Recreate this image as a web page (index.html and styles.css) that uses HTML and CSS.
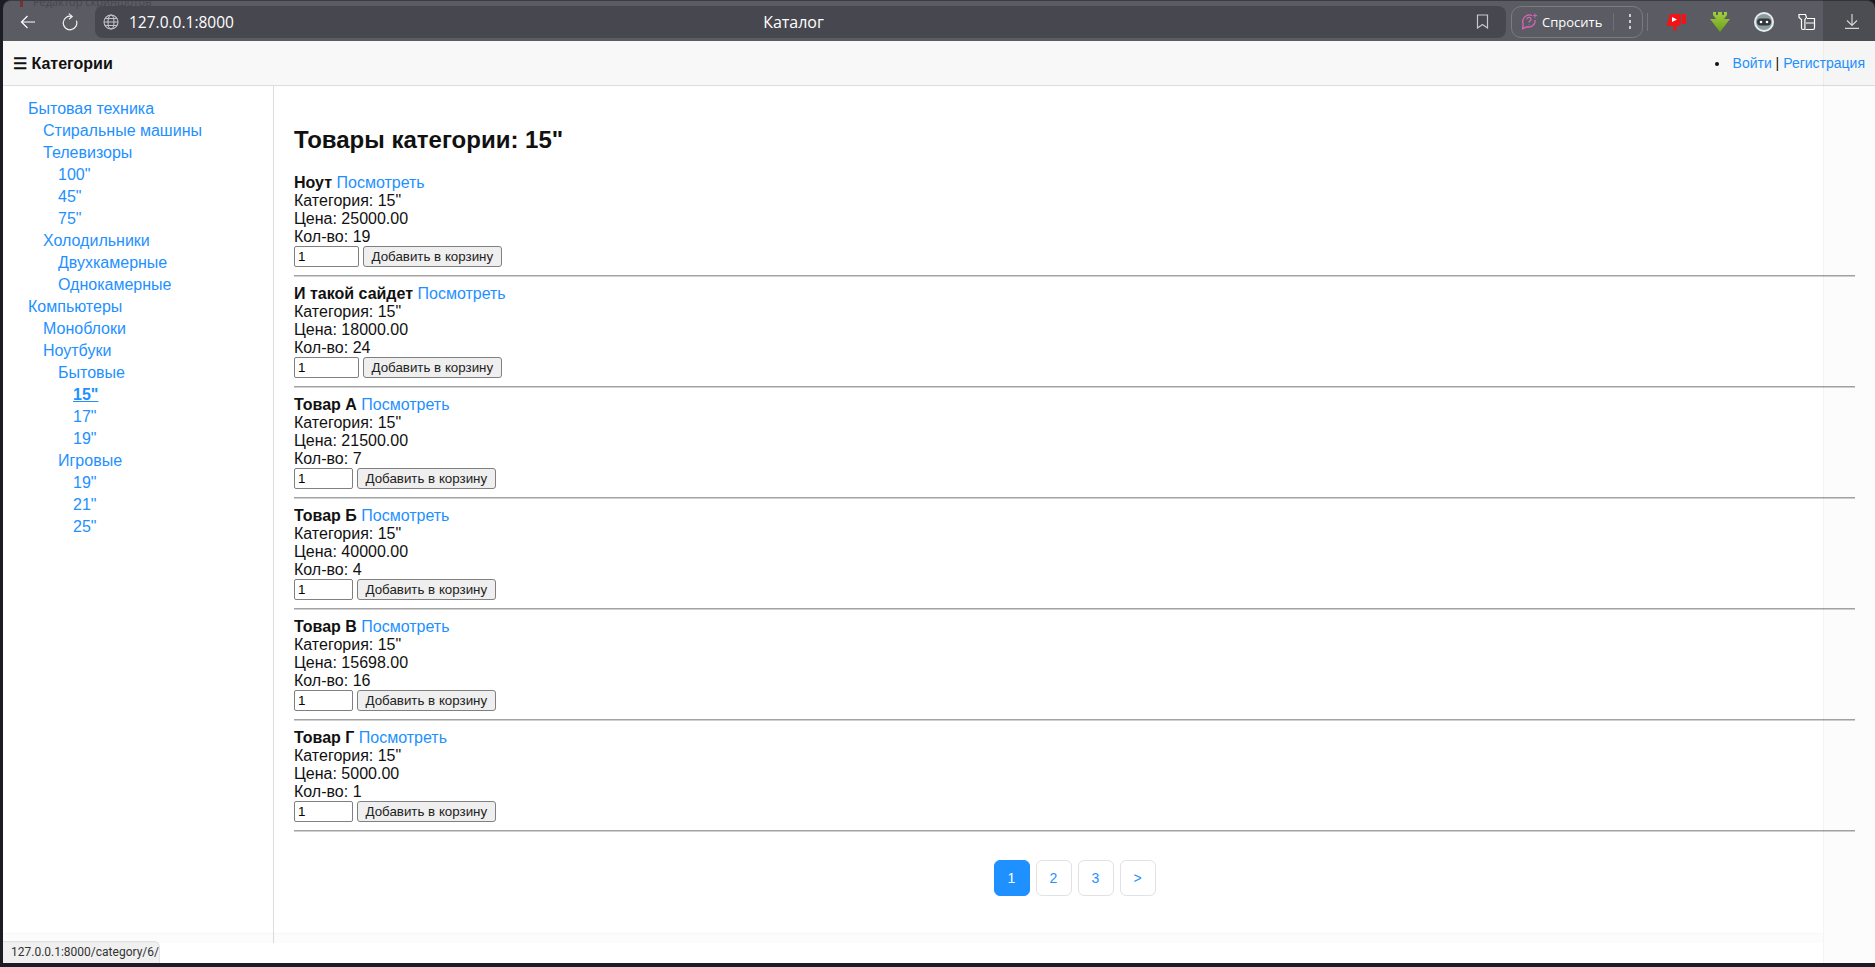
FILE: index.html
```html
<!DOCTYPE html>
<html>
<head>
    <title>Каталог</title>
    <link rel="stylesheet" href="styles.css">
</head>
<body>
    <div class="browser">
        <div class="toolbar">
            <span class="ghost-title">Редактор скриншотов</span>
            <button class="tool-btn back-btn">
                <svg width="16" height="14" viewBox="0 0 16 14" fill="none" stroke="#fff" stroke-width="1.2"><path d="M15 7H1.5M7.5 1L1.5 7l6 6"/></svg>
            </button>
            <button class="tool-btn reload-btn">
                <svg width="16" height="18" viewBox="0 0 16 18" fill="none" stroke="#f2f2f2" stroke-width="1.2"><path d="M9.8 3.400A6.800 6.800 0 1 0 14.400 7.600"/><path d="M6.800 0.600L10.200 3.400 7 6.200"/></svg>
            </button>
            <div class="address-bar">
                <div class="address-left">
                    <svg width="16" height="16" viewBox="0 0 16 16" fill="none" stroke="#c4c4c8" stroke-width="1.1"><circle cx="8" cy="8" r="7"/><ellipse cx="8" cy="8" rx="3" ry="7"/><path d="M1 8h14M2 4.500h12M2 11.500h12"/></svg>
                    <span class="url">127.0.0.1:8000</span>
                </div>
                <span class="page-title">Каталог</span>
                <svg class="bookmark" width="13" height="15" viewBox="0 0 13 15" fill="none" stroke="#c8c8cc" stroke-width="1.2"><path d="M1.500 1h10v13l-5-3.400-5 3.400z"/></svg>
            </div>
            <div class="ask-pill">
                <svg width="17" height="17" viewBox="0 0 17 17" fill="none" stroke="#d765b8" stroke-width="1.3"><path d="M11 2.600A6.600 6.600 0 0 0 2.200 11L1.600 15.600 6 13.800A6.600 6.600 0 0 0 14.200 7"/><path d="M6 6.200a2 2 0 1 1 2.600 2c-.5.3-.7.6-.7 1.200M7.900 11v.6"/><path d="M14 .6v4M12 2.600h4" stroke-width="1"/></svg>
                <span class="ask-text">Спросить</span>
                <span class="ask-divider"></span>
                <span class="ask-dots"><i></i><i></i><i></i></span>
            </div>
            <span class="tool-sep"></span>
            <div class="extensions">
                <svg width="20" height="20" viewBox="0 0 20 20"><path d="M4 2h11v11l-4 1-1 5-3-1 1-4H0.500z" fill="#f01418"/><rect x="16" y="2" width="4" height="10" fill="#f01418"/><path d="M6 5l5 2.500-5 2.500z" fill="#fff"/></svg>
                <svg width="20" height="20" viewBox="0 0 20 20"><defs><linearGradient id="arrowGreen" x1="0" y1="0" x2="0" y2="1"><stop offset="0" stop-color="#a3cf3c"/><stop offset="1" stop-color="#6d9f1e"/></linearGradient></defs><path d="M3 0h3v3h2V0h4v3h2V0h3v3l-3 4h6L10 20 0 7h6L3 3z" fill="url(#arrowGreen)"/></svg>
                <svg width="20" height="20" viewBox="0 0 20 20"><circle cx="10" cy="10" r="10" fill="#e6ecec"/><circle cx="10" cy="10" r="8" fill="#8b9ca0"/><rect x="3" y="6.500" width="14" height="7" rx="3.500" fill="#34383c"/><circle cx="7" cy="10" r="1.300" fill="#fff"/><circle cx="13" cy="10" r="1.300" fill="#fff"/></svg>
                <svg width="18" height="18" viewBox="0 0 18 18" fill="none" stroke="#fff" stroke-width="1.2"><path d="M1 1.500h6.500l1 3-1.600 2v9a1.500 1.500 0 0 1-1.500 1H5A1.500 1.500 0 0 1 3.500 15V6.500L1 4.500z"/><path d="M9 5.500h7.500v9.500a1.500 1.500 0 0 1-1.500 1.500H7.500M8 10h8.500"/></svg>
            </div>
            <button class="tool-btn download-btn">
                <svg width="14" height="15" viewBox="0 0 14 15" fill="none" stroke="#fff" stroke-width="1.2"><path d="M7 0v11M2 6.500l5 5 5-5M0 14.400h14"/></svg>
            </button>
        </div>

        <div class="site">
            <div class="site-header">
                <div class="menu-title">☰ Категории</div>
                <ul class="user-links">
                    <li><a href="#">Войти</a> | <a href="#">Регистрация</a></li>
                </ul>
            </div>

            <div class="site-body">
                <div class="sidebar">
                    <ul class="cat-tree">
                        <li><a href="#">Бытовая техника</a>
                            <ul>
                                <li><a href="#">Стиральные машины</a></li>
                                <li><a href="#">Телевизоры</a>
                                    <ul>
                                        <li><a href="#">100"</a></li>
                                        <li><a href="#">45"</a></li>
                                        <li><a href="#">75"</a></li>
                                    </ul>
                                </li>
                                <li><a href="#">Холодильники</a>
                                    <ul>
                                        <li><a href="#">Двухкамерные</a></li>
                                        <li><a href="#">Однокамерные</a></li>
                                    </ul>
                                </li>
                            </ul>
                        </li>
                        <li><a href="#">Компьютеры</a>
                            <ul>
                                <li><a href="#">Моноблоки</a></li>
                                <li><a href="#">Ноутбуки</a>
                                    <ul>
                                        <li><a href="#">Бытовые</a>
                                            <ul>
                                                <li><a href="#" class="current">15"</a></li>
                                                <li><a href="#">17"</a></li>
                                                <li><a href="#">19"</a></li>
                                            </ul>
                                        </li>
                                        <li><a href="#">Игровые</a>
                                            <ul>
                                                <li><a href="#">19"</a></li>
                                                <li><a href="#">21"</a></li>
                                                <li><a href="#">25"</a></li>
                                            </ul>
                                        </li>
                                    </ul>
                                </li>
                            </ul>
                        </li>
                    </ul>
                </div>

                <div class="content">
                    <h2>Товары категории: 15"</h2>

                    <div class="product">
                        <div><b>Ноут</b> <a href="#">Посмотреть</a></div>
                        <div>Категория: 15"</div>
                        <div>Цена: 25000.00</div>
                        <div>Кол-во: 19</div>
                        <form class="cart-form">
                            <input type="text" value="1" class="qty qty-wide">
                            <button type="button">Добавить в корзину</button>
                        </form>
                    </div>
                    <hr>

                    <div class="product">
                        <div><b>И такой сайдет</b> <a href="#">Посмотреть</a></div>
                        <div>Категория: 15"</div>
                        <div>Цена: 18000.00</div>
                        <div>Кол-во: 24</div>
                        <form class="cart-form">
                            <input type="text" value="1" class="qty qty-wide">
                            <button type="button">Добавить в корзину</button>
                        </form>
                    </div>
                    <hr>

                    <div class="product">
                        <div><b>Товар А</b> <a href="#">Посмотреть</a></div>
                        <div>Категория: 15"</div>
                        <div>Цена: 21500.00</div>
                        <div>Кол-во: 7</div>
                        <form class="cart-form">
                            <input type="text" value="1" class="qty">
                            <button type="button">Добавить в корзину</button>
                        </form>
                    </div>
                    <hr>

                    <div class="product">
                        <div><b>Товар Б</b> <a href="#">Посмотреть</a></div>
                        <div>Категория: 15"</div>
                        <div>Цена: 40000.00</div>
                        <div>Кол-во: 4</div>
                        <form class="cart-form">
                            <input type="text" value="1" class="qty">
                            <button type="button">Добавить в корзину</button>
                        </form>
                    </div>
                    <hr>

                    <div class="product">
                        <div><b>Товар В</b> <a href="#">Посмотреть</a></div>
                        <div>Категория: 15"</div>
                        <div>Цена: 15698.00</div>
                        <div>Кол-во: 16</div>
                        <form class="cart-form">
                            <input type="text" value="1" class="qty">
                            <button type="button">Добавить в корзину</button>
                        </form>
                    </div>
                    <hr>

                    <div class="product">
                        <div><b>Товар Г</b> <a href="#">Посмотреть</a></div>
                        <div>Категория: 15"</div>
                        <div>Цена: 5000.00</div>
                        <div>Кол-во: 1</div>
                        <form class="cart-form">
                            <input type="text" value="1" class="qty">
                            <button type="button">Добавить в корзину</button>
                        </form>
                    </div>
                    <hr>

                    <div class="pagination">
                        <a href="#" class="page active">1</a>
                        <a href="#" class="page">2</a>
                        <a href="#" class="page">3</a>
                        <a href="#" class="page">&gt;</a>
                    </div>
                </div>
            </div>

            <div class="status-bubble">127.0.0.1:8000/category/6/</div>
        </div>

        <div class="shade-toolbar"></div>
        <div class="shade-page"></div>
        <div class="shade-bottom"></div>
    </div>
</body>
</html>
```

FILE: styles.css
```css
/* Base styles */
* {
    box-sizing: border-box;
}

html, body {
    height: 100%;
}

body {
    margin: 0;
    padding: 0 0 4px 3px;
    overflow: hidden;
    background-color: #1c1c24;
    font-family: "Liberation Sans", Arial, sans-serif;
    font-size: 16px;
    color: #111;
}

a {
    color: #1e90ff;
    text-decoration: none;
}

.browser {
    position: relative;
    height: 963px;
    display: flex;
    flex-direction: column;
}

/* Browser toolbar */
.toolbar {
    position: relative;
    flex: 0 0 41px;
    display: flex;
    align-items: center;
    padding: 1px 0 0 0;
    background-color: #5b5b63;
    border-top: 1px solid #3c3c44;
    border-radius: 8px 8px 0 0;
    overflow: hidden;
    font-family: "Open Sans", "Noto Sans", sans-serif;
}

.ghost-title {
    position: absolute;
    left: 30px;
    top: -7px;
    font-size: 11px;
    color: #47474e;
}

.ghost-title::before {
    content: "";
    position: absolute;
    left: -13px;
    top: 0;
    width: 3px;
    height: 13px;
    background-color: #7a2f30;
}

.tool-btn {
    display: flex;
    align-items: center;
    justify-content: center;
    padding: 0;
    background: none;
    border: none;
}

.back-btn {
    width: 16px;
    margin-left: 17px;
}

.reload-btn {
    width: 16px;
    margin-left: 26px;
}

.address-bar {
    flex: 0 0 1411px;
    height: 32px;
    margin-left: 17px;
    display: grid;
    grid-template-columns: 1fr auto 1fr;
    align-items: center;
    padding: 0 12px 0 8px;
    background-color: #47474f;
    border-radius: 8px;
    color: #fff;
}

.address-left {
    display: flex;
    align-items: center;
    gap: 10px;
}

.url {
    font-size: 15.5px;
}

.page-title {
    margin-right: 10px;
    font-size: 16px;
}

.bookmark {
    justify-self: end;
    margin-right: 5px;
}

.ask-pill {
    flex: 0 0 132px;
    height: 32px;
    margin-left: 5px;
    display: flex;
    align-items: center;
    padding-left: 9px;
    border: 1px solid #7b7b82;
    border-radius: 10px;
    color: #fff;
}

.ask-text {
    margin-left: 4px;
    font-size: 13px;
}

.ask-divider {
    width: 1px;
    height: 18px;
    margin-left: 11px;
    background-color: #6f6f76;
}

.ask-dots {
    display: flex;
    flex-direction: column;
    gap: 3px;
    margin-left: 15px;
}

.ask-dots i {
    display: block;
    width: 2px;
    height: 3px;
    background-color: #cfcfd3;
}

.tool-sep {
    width: 1px;
    height: 18px;
    margin-left: 4px;
    background-color: #77777e;
}

.extensions {
    display: flex;
    align-items: center;
    gap: 24px;
    margin-left: 18px;
}

.download-btn {
    margin-left: 29px;
}

/* Site header */
.site {
    position: relative;
    flex: 1;
    min-height: 0;
    display: flex;
    flex-direction: column;
    background-color: #fff;
}

.site-header {
    flex: 0 0 45px;
    display: flex;
    align-items: center;
    justify-content: space-between;
    padding: 0 10px;
    background-color: #f8f8f8;
    border-bottom: 1px solid #ddd;
}

.menu-title {
    font-weight: bold;
}

.user-links {
    margin: 0;
    padding: 0;
    font-size: 14px;
}

.user-links li {
    list-style: disc;
    padding-left: 3px;
}

/* Layout below header */
.site-body {
    flex: 0 0 857px;
    display: flex;
    overflow: hidden;
}

.sidebar {
    flex: 0 0 271px;
    padding: 10px 0 0 25px;
    border-right: 1px solid #ddd;
}

.cat-tree,
.cat-tree ul {
    margin: 0;
    padding: 0;
    list-style: none;
}

.cat-tree ul {
    padding-left: 15px;
}

.cat-tree li {
    margin-top: 4px;
}

.cat-tree .current {
    font-weight: bold;
    text-decoration: underline;
}

.content {
    flex: 1;
    min-width: 0;
    padding: 20px;
}

.content h2 {
    margin: 20px 0;
    font-size: 24px;
}

.cart-form {
    display: flex;
    gap: 4px;
    height: 21px;
}

.qty {
    width: 59px;
    height: 21px;
    padding: 1px 3px;
    font-family: inherit;
    font-size: 13.33px;
    border: 1px solid #808080;
    border-radius: 2px;
}

.qty-wide {
    width: 65px;
}

.cart-form button {
    height: 21px;
    padding: 1px 7.5px;
    font-family: inherit;
    font-size: 13.33px;
    color: #222;
    background-color: #efefef;
    border: 1px solid #808080;
    border-radius: 3px;
}

hr {
    height: 2px;
    margin: 8px 0;
    border: none;
    border-top: 1px solid #a3a3a3;
    border-bottom: 1px solid #d0d0d0;
}

/* Pagination */
.pagination {
    display: flex;
    justify-content: center;
    gap: 6px;
    margin-top: 28px;
}

.page {
    width: 36px;
    height: 36px;
    display: flex;
    align-items: center;
    justify-content: center;
    font-size: 14px;
    border: 1px solid #e2e2e2;
    border-radius: 6px;
}

.page.active {
    color: #fff;
    background-color: #1e90ff;
    border-color: #1e90ff;
}

/* Link preview at the bottom */
.status-bubble {
    position: absolute;
    left: 0;
    bottom: 0;
    width: 157px;
    height: 22px;
    padding: 3px 0 0 8px;
    font-family: Roboto, "Noto Sans", sans-serif;
    font-size: 12px;
    color: #333;
    background-color: #f0f0f0;
    border-top: 1px solid #e2e2e2;
    border-right: 1px solid #e2e2e2;
    border-radius: 0 6px 0 0;
}

/* Traces of a window fading out over the page */
.shade-toolbar {
    position: absolute;
    left: 1820px;
    right: 0;
    top: 0;
    height: 41px;
    background-color: rgba(0, 0, 0, 0.16);
    pointer-events: none;
}

.shade-page {
    position: absolute;
    left: 1820px;
    right: 0;
    top: 41px;
    bottom: 0;
    background-color: rgba(0, 0, 0, 0.012);
    border-left: 1px solid rgba(0, 0, 0, 0.03);
    pointer-events: none;
}

.shade-bottom {
    position: absolute;
    left: 0;
    width: 1820px;
    top: 933px;
    height: 10px;
    background-color: rgba(0, 0, 0, 0.012);
    border-top: 1px solid rgba(0, 0, 0, 0.02);
    pointer-events: none;
}
```
